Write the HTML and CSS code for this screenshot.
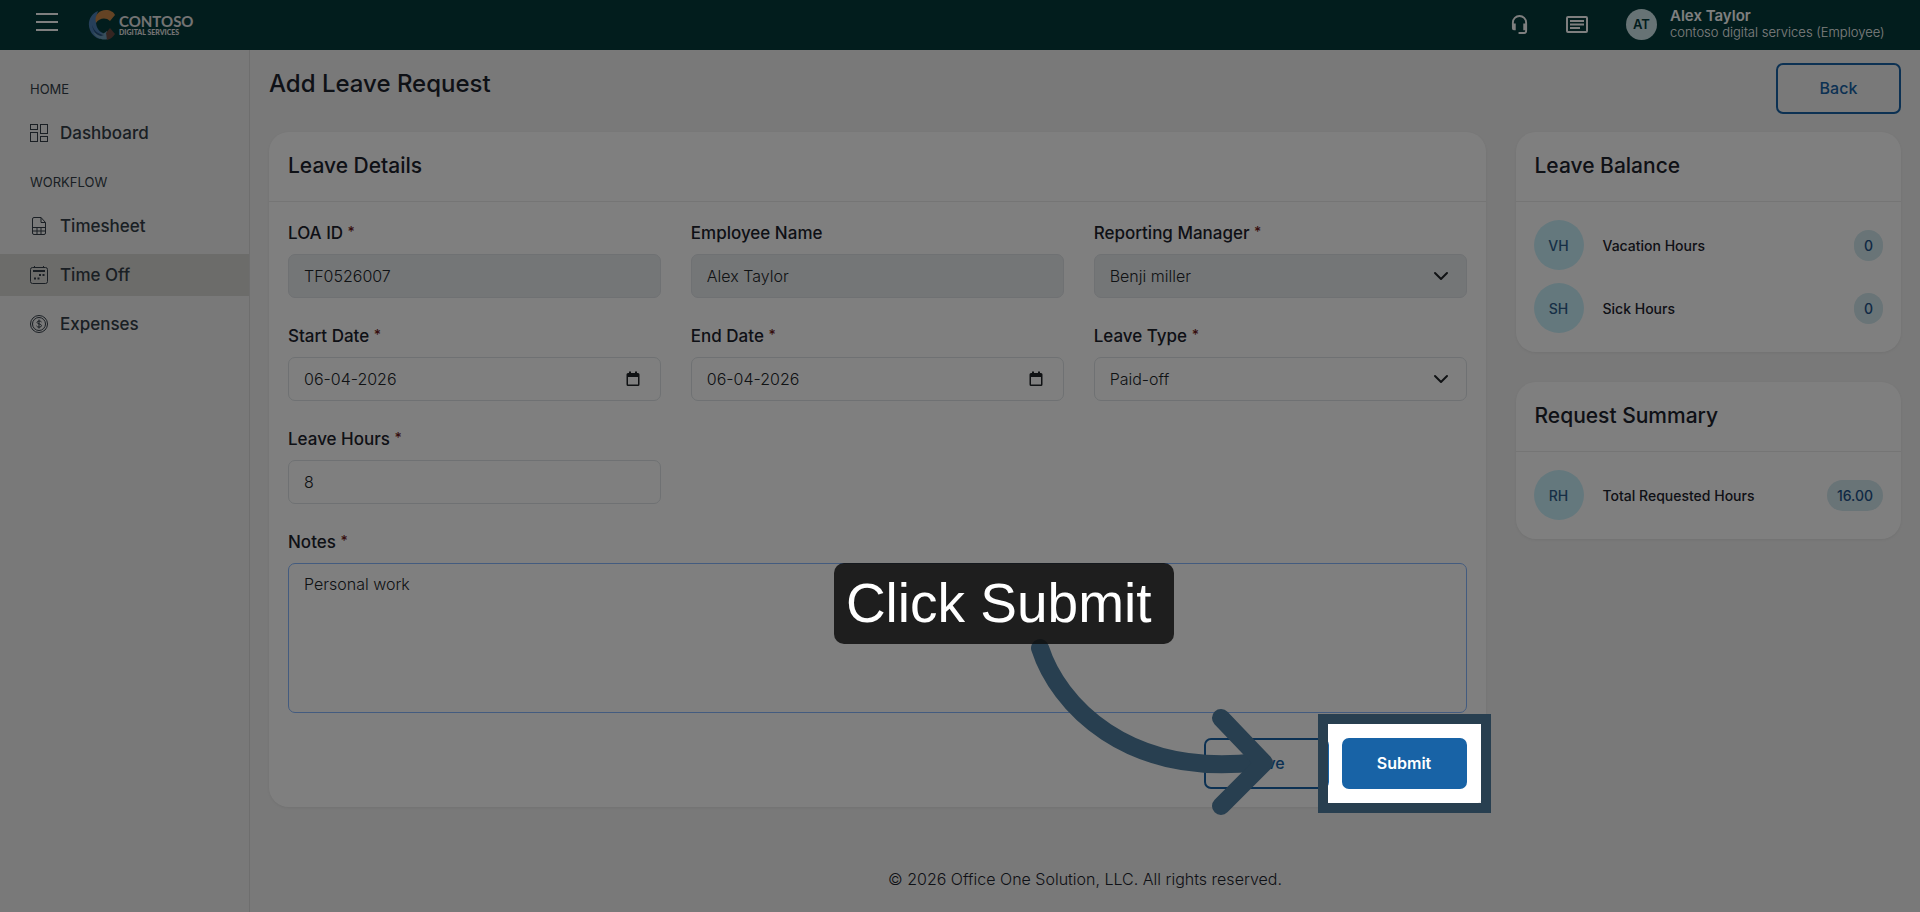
FILE: index.html
```html
<!DOCTYPE html>
<html lang="en">
<head>
   <meta charset="UTF-8">
   <meta name="viewport" content="width=device-width, initial-scale=1.0">
   <title>Add Leave Request</title>
   <link rel="stylesheet" href="styles.css">
</head>
<body>
   <header class="topbar">
      <button type="button" class="icon-btn menu-btn" aria-label="Menu">
         <svg width="22" height="18" viewBox="0 0 22 18" stroke="currentColor" stroke-width="2"><path d="M0 1h22M0 9h22M0 17h22"/></svg>
      </button>
      <a href="#" class="logo">
         <svg width="28" height="30" viewBox="0 0 28 30">
            <path d="M10 1C2 4-1 13 2 20c2 5 6 8 10 9l3-6C8 20 6 12 10 1z" fill="#4c7fb5"/>
            <path d="M8 13C6 5 11 0 18 0c4 0 8 2 9 5l-5 6c-4-4-11-3-14 2z" fill="#c88748"/>
            <path d="M5 22c4 2 10 3 14-1l3 7c-5 3-13 2-17-6z" fill="#6f9cb8"/>
            <path d="M22 18l5 6c-2 3-4 5-8 6l-1-7z" fill="#6a4a42"/>
            <path d="M4 15c2 6 6 9 12 10l-3 1C8 25 5 21 4 15z" fill="#27507e"/>
         </svg>
         <span class="logo-text">
            <span class="logo-name">CONTOSO</span>
            <span class="logo-sub">DIGITAL SERVICES</span>
         </span>
      </a>
      <div class="topbar-right">
         <button type="button" class="icon-btn" aria-label="Support">
            <svg width="17" height="19" viewBox="0 0 18 20" fill="none" stroke="currentColor" stroke-width="2">
               <path d="M2 10V8a7 7 0 0 1 14 0v9a2 2 0 0 1-2 2H8"/>
               <path d="M1 9h4v7H3a2 2 0 0 1-2-2zM17 9h-4v7h4z" fill="currentColor" stroke="none"/>
            </svg>
         </button>
         <button type="button" class="icon-btn" aria-label="Messages">
            <svg width="22" height="17" viewBox="0 0 22 17" fill="none" stroke="currentColor" stroke-width="2">
               <rect x="1" y="1" width="20" height="15" rx="1"/>
               <path d="M4 5h14M4 8.500h14M4 12h10"/>
            </svg>
         </button>
         <div class="user">
            <span class="user-avatar">AT</span>
            <div class="user-text">
               <div class="user-name">Alex Taylor</div>
               <div class="user-org">contoso digital services (Employee)</div>
            </div>
         </div>
      </div>
   </header>

   <div class="layout">
      <nav class="sidebar">
         <div class="nav-title">HOME</div>
         <a href="#" class="nav-link">
            <svg class="nav-icon" viewBox="0 0 18 18"><rect x=".5" y=".5" width="7" height="5"/><rect x="10.500" y=".5" width="7" height="9"/><rect x=".5" y="8.500" width="7" height="9"/><rect x="10.500" y="12.500" width="7" height="5"/></svg>
            Dashboard
         </a>
         <div class="nav-title">WORKFLOW</div>
         <a href="#" class="nav-link">
            <svg class="nav-icon" viewBox="0 0 18 18"><path d="M4 .5h7l4.500 5V16a1.500 1.500 0 0 1-1.500 1.500H4A1.500 1.500 0 0 1 2.500 16V2A1.500 1.500 0 0 1 4 .5zM11 .5v5h4.500M2.500 10.500h13M2.500 14h13M7 10.500v7M11 10.500v7"/></svg>
            Timesheet
         </a>
         <a href="#" class="nav-link active">
            <svg class="nav-icon" viewBox="0 0 18 18"><rect x=".5" y="1.500" width="17" height="16" rx="2"/><path d="M4.500 0v2M13.500 0v2"/><path d="M3 5h12M9 9h2M12.500 9h2M4 12.500h2M7.500 12.500h2" stroke-width="2"/></svg>
            Time Off
         </a>
         <a href="#" class="nav-link">
            <svg class="nav-icon" viewBox="0 0 18 18"><circle cx="9" cy="9" r="8.500"/><circle cx="9" cy="9" r="6.500"/><path d="M11.500 7c-.5-1.200-4.500-1.500-4.500.4C7 9.200 11.500 8.600 11.500 10.700c0 2-4.500 1.800-5 .2M9 4.500v9"/></svg>
            Expenses
         </a>
      </nav>

      <main class="main">
         <div class="page-head">
            <h1>Add Leave Request</h1>
            <button type="button" class="btn btn-outline">Back</button>
         </div>

         <div class="content">
            <form class="card details">
               <h2 class="card-title">Leave Details</h2>
               <div class="card-body form-grid">
                  <div class="field">
                     <label for="loa">LOA ID <span class="req">*</span></label>
                     <input type="text" id="loa" class="control" value="TF0526007" disabled>
                  </div>
                  <div class="field">
                     <label for="emp">Employee Name</label>
                     <input type="text" id="emp" class="control" value="Alex Taylor" disabled>
                  </div>
                  <div class="field">
                     <label for="manager">Reporting Manager <span class="req">*</span></label>
                     <div class="control-wrap">
                        <select id="manager" class="control" disabled><option>Benji miller</option></select>
                        <svg class="control-icon chevron" viewBox="0 0 16 16"><path d="M2 5l6 6 6-6"/></svg>
                     </div>
                  </div>
                  <div class="field">
                     <label for="start">Start Date <span class="req">*</span></label>
                     <div class="control-wrap">
                        <input type="text" id="start" class="control" value="06-04-2026">
                        <svg class="control-icon calendar" viewBox="0 0 16 16"><path d="M13 2h-1V.5h-2V2H6V.5H4V2H3a1.500 1.500 0 0 0-1.500 1.500v10A1.500 1.500 0 0 0 3 15h10a1.500 1.500 0 0 0 1.500-1.500v-10A1.500 1.500 0 0 0 13 2zm0 11.500H3V6h10z"/></svg>
                     </div>
                  </div>
                  <div class="field">
                     <label for="end">End Date <span class="req">*</span></label>
                     <div class="control-wrap">
                        <input type="text" id="end" class="control" value="06-04-2026">
                        <svg class="control-icon calendar" viewBox="0 0 16 16"><path d="M13 2h-1V.5h-2V2H6V.5H4V2H3a1.500 1.500 0 0 0-1.500 1.500v10A1.500 1.500 0 0 0 3 15h10a1.500 1.500 0 0 0 1.500-1.500v-10A1.500 1.500 0 0 0 13 2zm0 11.500H3V6h10z"/></svg>
                     </div>
                  </div>
                  <div class="field">
                     <label for="type">Leave Type <span class="req">*</span></label>
                     <div class="control-wrap">
                        <select id="type" class="control"><option>Paid-off</option></select>
                        <svg class="control-icon chevron" viewBox="0 0 16 16"><path d="M2 5l6 6 6-6"/></svg>
                     </div>
                  </div>
                  <div class="field">
                     <label for="hours">Leave Hours <span class="req">*</span></label>
                     <input type="text" id="hours" class="control" value="8">
                  </div>
                  <div class="field field-full">
                     <label for="notes">Notes <span class="req">*</span></label>
                     <textarea id="notes" class="control notes">Personal work</textarea>
                  </div>
               </div>
               <div class="actions">
                  <button type="button" class="btn btn-outline">Save</button>
                  <div class="tour-target">
                     <button type="submit" class="btn btn-primary">Submit</button>
                     <div class="tour-frame"></div>
                     <svg class="tour-arrow" width="260" height="200" viewBox="0 0 260 200">
                        <path d="M20 30C38 86 106 160 238 144"/>
                        <path d="M201 100l43 45-43 43"/>
                     </svg>
                     <div class="tour-tip">Click Submit</div>
                  </div>
               </div>
            </form>

            <aside class="side">
               <section class="card">
                  <h2 class="card-title">Leave Balance</h2>
                  <div class="card-body list">
                     <div class="list-row"><span class="badge">VH</span><span class="list-name">Vacation Hours</span><span class="pill">0</span></div>
                     <div class="list-row"><span class="badge">SH</span><span class="list-name">Sick Hours</span><span class="pill">0</span></div>
                  </div>
               </section>
               <section class="card">
                  <h2 class="card-title">Request Summary</h2>
                  <div class="card-body list">
                     <div class="list-row"><span class="badge">RH</span><span class="list-name">Total Requested Hours</span><span class="pill">16.00</span></div>
                  </div>
               </section>
            </aside>
         </div>

         <footer class="footer">© 2026 Office One Solution, LLC. All rights reserved.</footer>
      </main>
   </div>
</body>
</html>
```
FILE: styles.css
```css
* {
   box-sizing: border-box;
}
body {
   margin: 0;
   min-height: 100vh;
   display: flex;
   flex-direction: column;
   font-family: Inter, "Liberation Sans", sans-serif;
   font-size: 16px;
   color: #1c222c;
   background-color: #f2f2f2;
}
h1, h2 {
   margin: 0;
   font-weight: 500;
}
a {
   text-decoration: none;
   color: inherit;
}
button, input, select, textarea {
   font-family: inherit;
}

/* top bar */
.topbar {
   height: 50px;
   display: flex;
   align-items: center;
   padding: 0 32px 0 36px;
   background-color: #043a3a;
   color: #fff;
}
.icon-btn {
   display: flex;
   padding: 0;
   border: none;
   background: none;
   color: inherit;
}
.menu-btn {
   margin: 0 30px 6px 0;
}
.logo {
   display: flex;
   align-items: center;
   gap: 3px;
   color: #e6e6e6;
}
.logo-text {
   display: flex;
   flex-direction: column;
}
.logo-name {
   font-family: Lato, sans-serif;
   font-size: 15px;
   line-height: 14px;
   font-weight: 700;
}
.logo-sub {
   font-family: Lato, sans-serif;
   font-size: 7px;
   line-height: 8px;
   font-weight: 900;
}
.topbar-right {
   display: flex;
   align-items: center;
   gap: 38px;
   margin-left: auto;
   padding-bottom: 2px;
}
.user {
   display: flex;
   align-items: center;
   gap: 13px;
}
.user-avatar {
   width: 31px;
   height: 31px;
   display: flex;
   align-items: center;
   justify-content: center;
   border-radius: 50%;
   background-color: #cfe6ea;
   color: #043a3a;
   font-size: 13px;
   font-weight: 600;
}
.user-text {
   min-width: 218px;
}
.user-name {
   font-size: 15px;
   line-height: 16px;
   font-weight: 600;
}
.user-org {
   font-size: 13px;
   line-height: 16px;
   font-weight: 300;
}

/* sidebar */
.layout {
   flex: 1;
   display: flex;
}
.sidebar {
   width: 250px;
   flex-shrink: 0;
   padding-top: 11px;
   border-right: 1px solid #dcdcdc;
   color: #343e48;
}
.nav-title {
   margin: 16px 30px 11px;
   font-size: 13px;
   line-height: 24px;
}
.nav-link {
   height: 42px;
   display: flex;
   align-items: center;
   gap: 12px;
   padding: 0 30px;
   font-size: 17px;
   font-weight: 500;
}
.nav-link + .nav-link {
   margin-top: 7px;
}
.nav-link.active {
   background-color: #d8d8d4;
}
.nav-icon {
   width: 18px;
   height: 18px;
   fill: none;
   stroke: currentColor;
}

/* page */
.main {
   flex: 1;
   padding: 13px 19px 0;
}
.page-head {
   display: flex;
   justify-content: space-between;
   align-items: flex-start;
   margin-bottom: 18px;
}
.page-head h1 {
   font-size: 24px;
   line-height: 42px;
}
.btn {
   width: 125px;
   height: 51px;
   padding: 0 0 2px;
   border: 2px solid #1863a6;
   border-radius: 7px;
   font-size: 16px;
   font-weight: 500;
}
.btn-outline {
   background-color: transparent;
   color: #1863a6;
}
.btn-primary {
   background-color: #1863a6;
   color: #fff;
   font-weight: 600;
}
.content {
   display: grid;
   grid-template-columns: repeat(12, 1fr);
   gap: 30px;
   align-items: start;
}
.details {
   grid-column: span 9;
}
.side {
   grid-column: span 3;
   display: grid;
   gap: 30px;
}
.card {
   background-color: #fff;
   border-radius: 20px;
   box-shadow: 0 1px 3px rgba(0, 0, 0, .06);
}
.card-title {
   padding: 19px 19px 20px;
   border-bottom: 1px solid #eaeaea;
   font-size: 21px;
   line-height: 30px;
}
.card-body {
   padding: 18px 19px 19px;
}

/* form */
.form-grid {
   display: grid;
   grid-template-columns: repeat(3, 1fr);
   gap: 25px 30px;
}
.field label {
   display: block;
   margin-bottom: 7px;
   font-size: 17px;
   line-height: 27px;
   font-weight: 500;
}
.field-full {
   grid-column: 1 / -1;
}
.req {
   font-size: 14px;
   line-height: 14px;
   vertical-align: 2px;
   color: #701c1c;
}
.control-wrap {
   position: relative;
}
.control {
   display: block;
   width: 100%;
   height: 44px;
   padding: 0 15px;
   border: 1px solid #dee2e6;
   border-radius: 7px;
   background-color: #fff;
   color: #212529;
   font-size: 16px;
   font-weight: 300;
   appearance: none;
   outline: none;
}
.control:disabled {
   background-color: #e9ecef;
   opacity: 1;
}
.notes {
   height: 150px;
   padding: 8px 15px;
   border-color: #86b7fe;
   line-height: 24px;
   resize: none;
}
.control-icon {
   position: absolute;
   top: 14px;
   right: 18px;
   width: 16px;
   height: 16px;
   pointer-events: none;
}
.chevron {
   fill: none;
   stroke: #212529;
   stroke-width: 2;
   stroke-linecap: round;
   stroke-linejoin: round;
}
.calendar {
   right: 20px;
   fill: #212529;
}
.actions {
   display: flex;
   justify-content: flex-end;
   gap: 13px;
   padding: 6px 19px 18px;
}

/* balance lists */
.list {
   display: grid;
   gap: 13px;
   padding: 18px 18px 19px;
}
.list-row {
   display: flex;
   align-items: center;
   font-size: 14px;
   font-weight: 500;
}
.badge {
   width: 50px;
   height: 50px;
   display: flex;
   align-items: center;
   justify-content: center;
   border-radius: 50%;
   background-color: #c9f0fa;
   color: #2f5f8c;
}
.list-name {
   margin-left: 19px;
}
.pill {
   margin-left: auto;
   padding: 0 10px;
   border-radius: 16px;
   background-color: #d2e8ee;
   color: #1f5289;
   line-height: 31px;
}
.footer {
   margin-top: 60px;
   line-height: 24px;
   text-align: center;
   font-weight: 300;
}

/* tour step: the frame's shadow dims everything round the target */
.tour-target {
   position: relative;
}
.tour-frame {
   position: absolute;
   inset: -14px;
   outline: 10px solid #283f50;
   box-shadow: 0 0 0 9999px rgba(0, 0, 0, .5);
   z-index: 10;
   pointer-events: none;
}
.tour-arrow {
   position: absolute;
   right: 187px;
   top: -120px;
   z-index: 11;
   fill: none;
   stroke: #283f50;
   stroke-width: 18;
   stroke-linecap: round;
   stroke-linejoin: round;
   pointer-events: none;
}
.tour-tip {
   position: absolute;
   right: 293px;
   bottom: 145px;
   z-index: 12;
   padding: 0 22px 0 12px;
   border-radius: 10px;
   background-color: rgba(14, 14, 14, .86);
   color: #fff;
   font-family: "Liberation Sans", Arial, sans-serif;
   font-size: 55px;
   line-height: 81px;
   white-space: nowrap;
}
```
